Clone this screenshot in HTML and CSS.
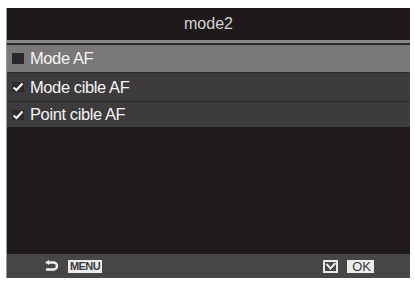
FILE: index.html
```html
<!DOCTYPE html>
<html>
<head>
<meta charset="utf-8">
<link rel="stylesheet" href="styles.css">
</head>
<body>
<div class="screen">
  <div class="header">mode2</div>
  <div class="rule"></div>
  <div class="row active">
    <span class="box"></span>
    <span class="label">Mode AF</span>
  </div>
  <div class="row r2">
    <svg class="check" viewBox="0 0 12 10" width="12" height="10"><path d="M1.5 5.5 L4.5 8 L10.5 1.5" fill="none" stroke="#f2f2f2" stroke-width="2.2"/></svg>
    <span class="label">Mode cible AF</span>
  </div>
  <div class="row r3">
    <svg class="check" viewBox="0 0 12 10" width="12" height="10"><path d="M1.5 5.5 L4.5 8 L10.5 1.5" fill="none" stroke="#f2f2f2" stroke-width="2.2"/></svg>
    <span class="label">Point cible AF</span>
  </div>
  <div class="body"></div>
  <div class="footer">
    <div class="left">
      <svg class="back" viewBox="0 0 14 12" width="14" height="12"><path d="M2 2.5 H8.5 A3.5 3.5 0 0 1 8.5 9.5 H1" fill="none" stroke="#f0f0f0" stroke-width="2.4"/><path d="M0 2.5 L4 0 L4 5 Z" fill="#f0f0f0"/></svg>
      <span class="key menu">MENU</span>
    </div>
    <div class="right">
      <svg class="tick" viewBox="0 0 15 13" width="15" height="13"><rect x="1" y="1" width="13" height="11" fill="none" stroke="#e8e8e8" stroke-width="2"/><path d="M3.5 4 L7.5 8.5 L12.5 3" fill="none" stroke="#e8e8e8" stroke-width="2"/></svg>
      <span class="key ok">OK</span>
    </div>
  </div>
</div>
</body>
</html>
```
FILE: styles.css
```css
html, body {
  margin: 0;
  padding: 0;
  background: #ffffff;
}
.screen {
  margin: 8px 0 0 7px;
  width: 403px;
  height: 270px;
  background: #1f1b1c;
  display: flex;
  flex-direction: column;
  font-family: "Liberation Sans", Arial, sans-serif;
  box-shadow: -1px 0 0 #9a9a9a;
}
.header {
  height: 32px;
  line-height: 32px;
  text-align: center;
  color: #d4d4d4;
  font-size: 16px;
  background: #1e1a1b;
}
.rule {
  height: 3px;
  background: #8a8a8a;
  border-bottom: 2px solid #2a2828;
}
.row {
  display: flex;
  align-items: center;
  gap: 5px;
  padding-left: 5px;
  color: #f4f4f4;
  font-size: 16.5px;
  letter-spacing: -0.4px;
  background: #3d3b3c;
}
.row.active {
  height: 27px;
  background: #7a7878;
  border-bottom: 1px solid #2c2a2a;
}
.row.r2 {
  height: 28px;
  border-bottom: 1px solid #2a2828;
}
.row.r3 {
  height: 25px;
}
.box {
  width: 12px;
  height: 11px;
  background: #2b2627;
  margin-right: 1px;
}
.check {
  background: #2c2a2a;
  margin-right: 1px;
}
.label {
  line-height: 1;
}
.body {
  flex: 1;
  background: #1f1b1c;
}
.footer {
  height: 24px;
  background: #464646;
  display: flex;
  align-items: center;
  justify-content: space-between;
  padding: 0 36px 0 38px;
}
.left, .right {
  display: flex;
  align-items: center;
  gap: 9px;
}
.key {
  background: #ececec;
  color: #3a3a3a;
  font-weight: bold;
  line-height: 13px;
  height: 13px;
  display: inline-block;
}
.menu {
  font-size: 11px;
  letter-spacing: -0.6px;
  padding: 0 2px 0 2px;
}
.ok {
  font-size: 13px;
  padding: 0 3px 0 5px;
  font-weight: normal;
}
```
